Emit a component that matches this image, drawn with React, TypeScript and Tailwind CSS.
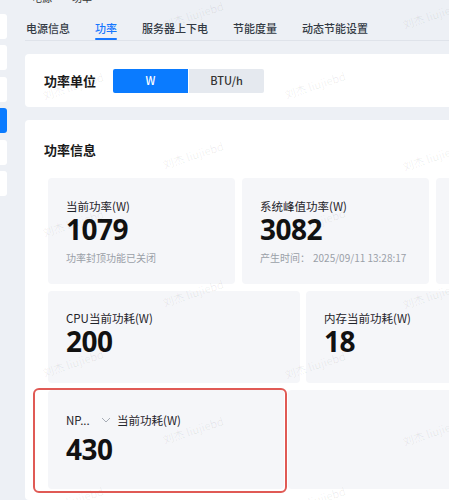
import React from "react";

const tabs = ["电源信息", "功率", "服务器上下电", "节能度量", "动态节能设置"];

// faint repeated watermark positions (center points)
const marks: [number, number][] = [
  [193, 15], [433, 15], [73, 86], [315, 85],
  [193, 155], [433, 157], [73, 223], [315, 222],
  [193, 293], [433, 295], [73, 363], [315, 365],
  [193, 430], [433, 432], [73, 500], [315, 500],
];

function StatCard({
  width,
  height,
  label,
  value,
  sub,
  padTop = "pt-[20px]",
}: {
  width: string;
  height: string;
  label: React.ReactNode;
  value: string;
  sub?: React.ReactNode;
  padTop?: string;
}) {
  return (
    <div className={`${width} ${height} ${padTop} shrink-0 rounded-[4px] bg-[#f5f6f9] pl-[18px]`}>
      <div className="text-[11.5px] leading-[16px] text-[#1f2329]">{label}</div>
      <div className="mt-[1px] font-['Noto_Sans',sans-serif] text-[28px] font-bold leading-[28px] tracking-[-0.5px] text-[#111]">
        {value}
      </div>
      {sub ? <div className="mt-[8px] text-[10px] leading-[14px] text-[#9aa0a8]">{sub}</div> : null}
    </div>
  );
}

export default function App() {
  return (
    <div className="relative flex h-[500px] w-[449px] overflow-hidden bg-[#edf0f5] font-['Noto_Sans_CJK_SC','Noto_Sans',sans-serif]">
      <aside className="flex w-[25px] shrink-0 flex-col gap-[6.4px] pt-[14px]">
        {[0, 1, 2, 3, 4, 5].map((i) => (
          <div
            key={i}
            className={
              i === 3
                ? "h-[25px] w-[7px] rounded-r-[3px] bg-[#0a7bff]"
                : "h-[25px] w-[7px] rounded-r-[3px] bg-white"
            }
          />
        ))}
      </aside>

      <main className="flex w-[480px] shrink-0 flex-col">
        <div className="flex h-[3px] items-end overflow-hidden pl-[7px] text-[10px] leading-[10px] text-[#333]">
          <span>电源</span>
          <span className="ml-[20px]">功率</span>
        </div>

        <nav className="flex h-[38px] gap-[25px] border-b border-[#dfe3ea] pl-[1px]">
          {tabs.map((t) => {
            const active = t === "功率";
            return (
              <div key={t} className="flex flex-col justify-end">
                <span
                  className={
                    active
                      ? "text-[11px] font-medium leading-[14px] text-[#1677ff]"
                      : "text-[11px] font-medium leading-[14px] text-[#333a44]"
                  }
                >
                  {t}
                </span>
                <div className="h-[3px]" />
                <div className={active ? "h-[2px] rounded-[1px] bg-[#1677ff]" : "h-[2px]"} />
              </div>
            );
          })}
        </nav>

        <section className="mt-[13px] flex h-[53px] shrink-0 items-center rounded-[4px] bg-white pl-[19px]">
          <span className="w-[69px] text-[13px] font-bold leading-[18px] text-[#1a1a1a]">功率单位</span>
          <div className="flex h-[24px]">
            <button className="w-[75px] rounded-l-[2px] bg-[#0a7bff] text-[11px] font-medium text-white">
              W
            </button>
            <button className="ml-[1px] w-[75px] rounded-r-[2px] bg-[#e5e9ef] text-[11px] font-medium text-[#333]">
              BTU/h
            </button>
          </div>
        </section>

        <section className="mt-[13px] flex-1 rounded-[4px] bg-white pl-[19px] pt-[21px]">
          <h2 className="text-[13px] font-bold leading-[18px] text-[#1a1a1a]">功率信息</h2>

          <div className="ml-[4px] mt-[19px] flex gap-[7px]">
            <StatCard width="w-[187px]" height="h-[106px]" label="当前功率(W)" value="1079" sub="功率封顶功能已关闭" />
            <StatCard
              width="w-[187px]"
              height="h-[106px]"
              label="系统峰值功率(W)"
              value="3082"
              sub={
                <>
                  产生时间：<span className="ml-[3px]">2025/09/11 13:28:17</span>
                </>
              }
            />
            <StatCard width="w-[187px]" height="h-[106px]" label="" value="" />
          </div>

          <div className="ml-[4px] mt-[7px] flex gap-[6px]">
            <StatCard width="w-[252px]" height="h-[92px]" padTop="pt-[19px]" label="CPU当前功耗(W)" value="200" />
            <StatCard width="w-[252px]" height="h-[92px]" padTop="pt-[19px]" label="内存当前功耗(W)" value="18" />
          </div>

          <div className="ml-[4px] mt-[7px] flex gap-[4px]">
            <div className="h-[99px] w-[236px] shrink-0 rounded-[4px] bg-[#f5f6f9] pl-[17px] pt-[17px]">
              <div className="flex h-[25px] items-center">
                <div className="flex h-[25px] w-[47px] items-center justify-between pl-[1px] pr-[1px]">
                  <span className="text-[11.5px] leading-[16px] text-[#1f2329]">NP...</span>
                  <svg width="10" height="6" viewBox="0 0 10 6" fill="none">
                    <path d="M1 1l4 4 4-4" stroke="#a7adb6" strokeWidth="1" />
                  </svg>
                </div>
                <span className="ml-[5px] text-[11.5px] leading-[16px] text-[#1f2329]">当前功耗(W)</span>
              </div>
              <div className="mt-[3px] pl-[1px] font-['Noto_Sans',sans-serif] text-[28px] font-bold leading-[28px] tracking-[-0.5px] text-[#111]">
                430
              </div>
            </div>
            <div className="h-[99px] w-[252px] shrink-0 rounded-[4px] bg-[#f5f6f9]" />
          </div>
        </section>
      </main>

      {/* watermark layer */}
      <div className="pointer-events-none absolute inset-0">
        {marks.map(([x, y], i) => (
          <span
            key={i}
            className="absolute -translate-x-1/2 -translate-y-1/2 -rotate-[18deg] whitespace-nowrap text-[11px] text-[rgba(0,0,0,0.07)]"
            style={{ left: x, top: y }}
          >
            刘杰 liujiebd
          </span>
        ))}
      </div>

      {/* highlight frame around the NPU card */}
      <div className="pointer-events-none absolute left-[33px] top-[388px] h-[105px] w-[254px] rounded-[6px] border-[2.5px] border-[#e05a55]" />
    </div>
  );
}
